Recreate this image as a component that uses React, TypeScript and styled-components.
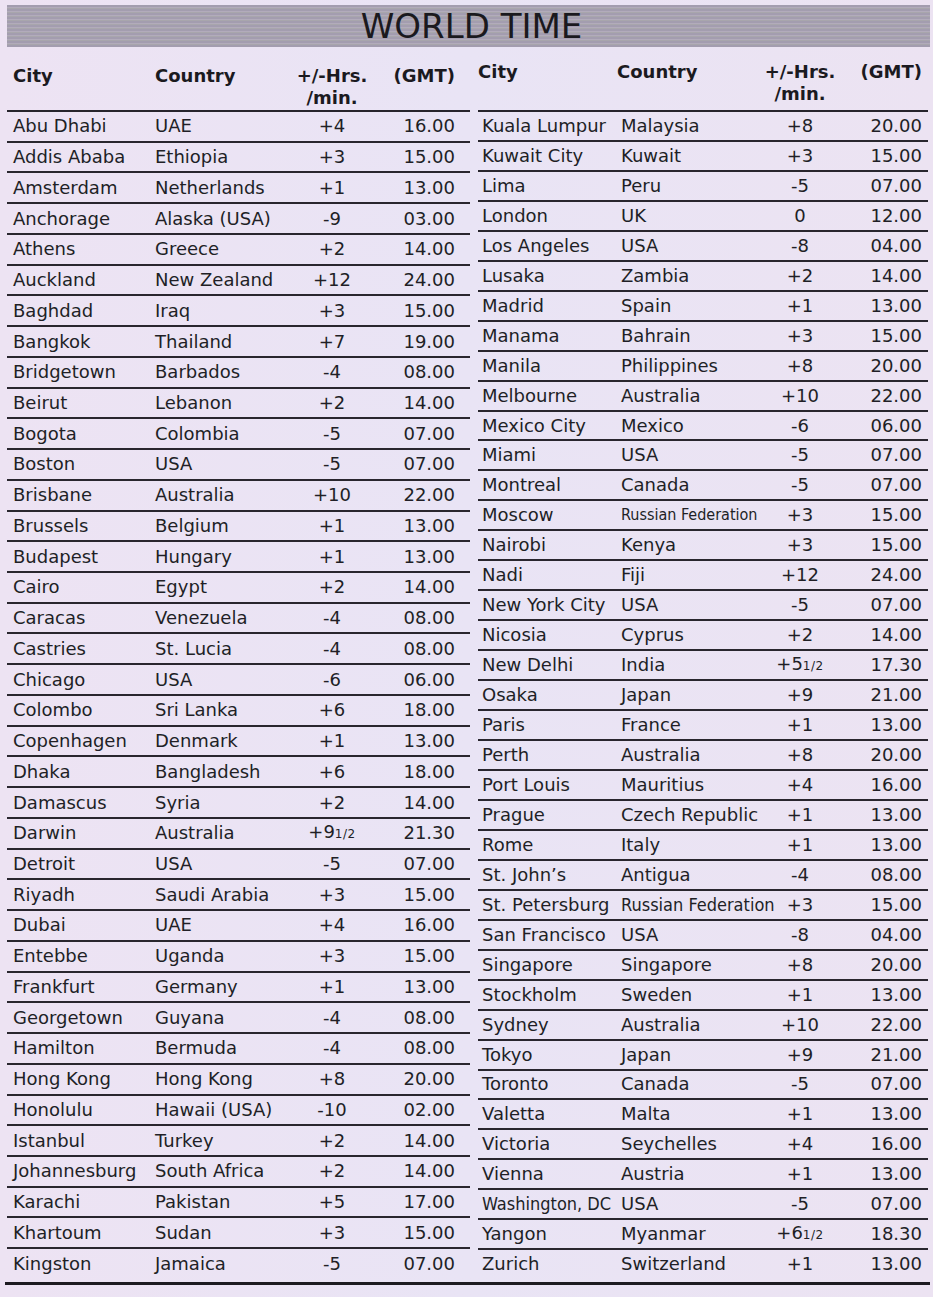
import styled, { createGlobalStyle } from 'styled-components';

type Side = 'left' | 'right';

type Entry = {
  city: string;
  country: string;
  offset: string;
  half?: boolean;
  gmt: string;
  narrow?: 'small' | 'fit';
  cityNarrow?: boolean;
};

const left: Entry[] = [
  { city: 'Abu Dhabi', country: 'UAE', offset: '+4', gmt: '16.00' },
  { city: 'Addis Ababa', country: 'Ethiopia', offset: '+3', gmt: '15.00' },
  { city: 'Amsterdam', country: 'Netherlands', offset: '+1', gmt: '13.00' },
  { city: 'Anchorage', country: 'Alaska (USA)', offset: '-9', gmt: '03.00' },
  { city: 'Athens', country: 'Greece', offset: '+2', gmt: '14.00' },
  { city: 'Auckland', country: 'New Zealand', offset: '+12', gmt: '24.00' },
  { city: 'Baghdad', country: 'Iraq', offset: '+3', gmt: '15.00' },
  { city: 'Bangkok', country: 'Thailand', offset: '+7', gmt: '19.00' },
  { city: 'Bridgetown', country: 'Barbados', offset: '-4', gmt: '08.00' },
  { city: 'Beirut', country: 'Lebanon', offset: '+2', gmt: '14.00' },
  { city: 'Bogota', country: 'Colombia', offset: '-5', gmt: '07.00' },
  { city: 'Boston', country: 'USA', offset: '-5', gmt: '07.00' },
  { city: 'Brisbane', country: 'Australia', offset: '+10', gmt: '22.00' },
  { city: 'Brussels', country: 'Belgium', offset: '+1', gmt: '13.00' },
  { city: 'Budapest', country: 'Hungary', offset: '+1', gmt: '13.00' },
  { city: 'Cairo', country: 'Egypt', offset: '+2', gmt: '14.00' },
  { city: 'Caracas', country: 'Venezuela', offset: '-4', gmt: '08.00' },
  { city: 'Castries', country: 'St. Lucia', offset: '-4', gmt: '08.00' },
  { city: 'Chicago', country: 'USA', offset: '-6', gmt: '06.00' },
  { city: 'Colombo', country: 'Sri Lanka', offset: '+6', gmt: '18.00' },
  { city: 'Copenhagen', country: 'Denmark', offset: '+1', gmt: '13.00' },
  { city: 'Dhaka', country: 'Bangladesh', offset: '+6', gmt: '18.00' },
  { city: 'Damascus', country: 'Syria', offset: '+2', gmt: '14.00' },
  { city: 'Darwin', country: 'Australia', offset: '+9', half: true, gmt: '21.30' },
  { city: 'Detroit', country: 'USA', offset: '-5', gmt: '07.00' },
  { city: 'Riyadh', country: 'Saudi Arabia', offset: '+3', gmt: '15.00' },
  { city: 'Dubai', country: 'UAE', offset: '+4', gmt: '16.00' },
  { city: 'Entebbe', country: 'Uganda', offset: '+3', gmt: '15.00' },
  { city: 'Frankfurt', country: 'Germany', offset: '+1', gmt: '13.00' },
  { city: 'Georgetown', country: 'Guyana', offset: '-4', gmt: '08.00' },
  { city: 'Hamilton', country: 'Bermuda', offset: '-4', gmt: '08.00' },
  { city: 'Hong Kong', country: 'Hong Kong', offset: '+8', gmt: '20.00' },
  { city: 'Honolulu', country: 'Hawaii (USA)', offset: '-10', gmt: '02.00' },
  { city: 'Istanbul', country: 'Turkey', offset: '+2', gmt: '14.00' },
  { city: 'Johannesburg', country: 'South Africa', offset: '+2', gmt: '14.00' },
  { city: 'Karachi', country: 'Pakistan', offset: '+5', gmt: '17.00' },
  { city: 'Khartoum', country: 'Sudan', offset: '+3', gmt: '15.00' },
  { city: 'Kingston', country: 'Jamaica', offset: '-5', gmt: '07.00' },
];

const right: Entry[] = [
  { city: 'Kuala Lumpur', country: 'Malaysia', offset: '+8', gmt: '20.00' },
  { city: 'Kuwait City', country: 'Kuwait', offset: '+3', gmt: '15.00' },
  { city: 'Lima', country: 'Peru', offset: '-5', gmt: '07.00' },
  { city: 'London', country: 'UK', offset: '0', gmt: '12.00' },
  { city: 'Los Angeles', country: 'USA', offset: '-8', gmt: '04.00' },
  { city: 'Lusaka', country: 'Zambia', offset: '+2', gmt: '14.00' },
  { city: 'Madrid', country: 'Spain', offset: '+1', gmt: '13.00' },
  { city: 'Manama', country: 'Bahrain', offset: '+3', gmt: '15.00' },
  { city: 'Manila', country: 'Philippines', offset: '+8', gmt: '20.00' },
  { city: 'Melbourne', country: 'Australia', offset: '+10', gmt: '22.00' },
  { city: 'Mexico City', country: 'Mexico', offset: '-6', gmt: '06.00' },
  { city: 'Miami', country: 'USA', offset: '-5', gmt: '07.00' },
  { city: 'Montreal', country: 'Canada', offset: '-5', gmt: '07.00' },
  { city: 'Moscow', country: 'Russian Federation', narrow: 'small', offset: '+3', gmt: '15.00' },
  { city: 'Nairobi', country: 'Kenya', offset: '+3', gmt: '15.00' },
  { city: 'Nadi', country: 'Fiji', offset: '+12', gmt: '24.00' },
  { city: 'New York City', country: 'USA', offset: '-5', gmt: '07.00' },
  { city: 'Nicosia', country: 'Cyprus', offset: '+2', gmt: '14.00' },
  { city: 'New Delhi', country: 'India', offset: '+5', half: true, gmt: '17.30' },
  { city: 'Osaka', country: 'Japan', offset: '+9', gmt: '21.00' },
  { city: 'Paris', country: 'France', offset: '+1', gmt: '13.00' },
  { city: 'Perth', country: 'Australia', offset: '+8', gmt: '20.00' },
  { city: 'Port Louis', country: 'Mauritius', offset: '+4', gmt: '16.00' },
  { city: 'Prague', country: 'Czech Republic', offset: '+1', gmt: '13.00' },
  { city: 'Rome', country: 'Italy', offset: '+1', gmt: '13.00' },
  { city: 'St. John’s', country: 'Antigua', offset: '-4', gmt: '08.00' },
  { city: 'St. Petersburg', country: 'Russian Federation', narrow: 'fit', offset: '+3', gmt: '15.00' },
  { city: 'San Francisco', country: 'USA', offset: '-8', gmt: '04.00' },
  { city: 'Singapore', country: 'Singapore', offset: '+8', gmt: '20.00' },
  { city: 'Stockholm', country: 'Sweden', offset: '+1', gmt: '13.00' },
  { city: 'Sydney', country: 'Australia', offset: '+10', gmt: '22.00' },
  { city: 'Tokyo', country: 'Japan', offset: '+9', gmt: '21.00' },
  { city: 'Toronto', country: 'Canada', offset: '-5', gmt: '07.00' },
  { city: 'Valetta', country: 'Malta', offset: '+1', gmt: '13.00' },
  { city: 'Victoria', country: 'Seychelles', offset: '+4', gmt: '16.00' },
  { city: 'Vienna', country: 'Austria', offset: '+1', gmt: '13.00' },
  { city: 'Washington, DC', cityNarrow: true, country: 'USA', offset: '-5', gmt: '07.00' },
  { city: 'Yangon', country: 'Myanmar', offset: '+6', half: true, gmt: '18.30' },
  { city: 'Zurich', country: 'Switzerland', offset: '+1', gmt: '13.00' },
];

const GlobalStyle = createGlobalStyle`
  html, body {
    margin: 0;
    padding: 0;
    background: #ebe4f3;
  }
  body {
    font-family: "DejaVu Sans", Verdana, sans-serif;
    color: #1d1b21;
  }
`;

const Page = styled.div`
  width: 933px;
  height: 1297px;
  padding: 5px 0 0 7px;
  box-sizing: border-box;
  background: linear-gradient(90deg, #ede3f3 0%, #e9e4f5 50%, #ece3f2 100%);
`;

const TitleBar = styled.div`
  width: 923px;
  height: 42px;
  display: flex;
  align-items: center;
  justify-content: center;
  background: repeating-linear-gradient(
    180deg,
    #a39daf 0px,
    #a39daf 2px,
    #b2abbb 2px,
    #b2abbb 3px,
    #a8a6ac 3px,
    #a8a6ac 4px
  );
`;

const Title = styled.h1`
  margin: 0;
  padding-left: 6px;
  font-family: "DejaVu Sans", Verdana, sans-serif;
  font-weight: 400;
  font-size: 34px;
  line-height: 42px;
  color: #1a191e;
`;

const Tables = styled.div`
  display: grid;
  grid-template-columns: 463px 450px;
  column-gap: 8px;
  height: 1231px;
`;

const Column = styled.section`
  display: flex;
  flex-direction: column;
`;

const cellGrid = (side: Side) =>
  side === 'left' ? '142px 140px 86px 1fr' : '139px 141px 84px 1fr';

const HeadRow = styled.div<{ $side: Side }>`
  display: grid;
  grid-template-columns: ${({ $side }) => cellGrid($side)};
  align-items: start;
  height: 65px;
  padding-top: ${({ $side }) => ($side === 'left' ? '18px' : '14px')};
  box-sizing: border-box;
  border-bottom: 2px solid #27242c;
  font-weight: 700;
  font-size: 18px;
  line-height: 22px;
  color: #1b1a1f;
`;

const HeadCell = styled.div<{ $align?: 'left' | 'center' | 'right'; $pad?: number }>`
  text-align: ${({ $align }) => $align ?? 'left'};
  padding-left: ${({ $align, $pad }) => ($align === 'right' ? 0 : $pad ?? 0)}px;
  padding-right: ${({ $align, $pad }) => ($align === 'right' ? $pad ?? 0 : 0)}px;
  white-space: nowrap;
`;

const Body = styled.div`
  flex: 1;
  display: flex;
  flex-direction: column;
`;

const Row = styled.div<{ $side: Side; $last: boolean }>`
  flex: 1;
  display: grid;
  grid-template-columns: ${({ $side }) => cellGrid($side)};
  align-items: center;
  border-bottom: ${({ $last }) => ($last ? 'none' : '2px solid #29262e')};
  font-size: 18px;
  line-height: 22px;
`;

const Cell = styled.div<{
  $align?: 'left' | 'center' | 'right';
  $pad?: number;
  $narrow?: 'small' | 'fit';
}>`
  text-align: ${({ $align }) => $align ?? 'left'};
  padding-left: ${({ $align, $pad }) => ($align === 'right' ? 0 : $pad ?? 0)}px;
  padding-right: ${({ $align, $pad }) => ($align === 'right' ? $pad ?? 0 : 0)}px;
  white-space: nowrap;
  overflow: visible;
  font-family: ${({ $narrow }) =>
    $narrow ? '"DejaVu Sans Condensed", "DejaVu Sans", sans-serif' : 'inherit'};
  font-stretch: ${({ $narrow }) => ($narrow ? 'condensed' : 'normal')};
  font-size: ${({ $narrow }) => ($narrow === 'small' ? '16px' : '18px')};
  color: #211f26;
`;

const Frac = styled.span`
  font-size: 12px;
  letter-spacing: 0.5px;
`;

const BottomRule = styled.div`
  width: 925px;
  margin: 4px 0 0 -2px;
  height: 3px;
  background: #1d1b21;
`;

function TimeColumn({ side, rows }: { side: Side; rows: Entry[] }) {
  const cityPad = side === 'left' ? 6 : 4;
  const headPad = side === 'left' ? 6 : 0;
  const gmtPad = side === 'left' ? 15 : 6;
  return (
    <Column>
      <HeadRow $side={side}>
        <HeadCell $pad={headPad}>City</HeadCell>
        <HeadCell $pad={headPad}>Country</HeadCell>
        <HeadCell $align="center">
          +/-Hrs.
          <br />
          /min.
        </HeadCell>
        <HeadCell $align="right" $pad={gmtPad}>
          (GMT)
        </HeadCell>
      </HeadRow>
      <Body>
        {rows.map((r, i) => (
          <Row key={r.city} $side={side} $last={i === rows.length - 1}>
            <Cell $pad={cityPad} $narrow={r.cityNarrow ? 'fit' : undefined}>
              {r.city}
            </Cell>
            <Cell $pad={cityPad} $narrow={r.narrow}>
              {r.country}
            </Cell>
            <Cell $align="center">
              {r.offset}
              {r.half && <Frac>1/2</Frac>}
            </Cell>
            <Cell $align="right" $pad={gmtPad}>
              {r.gmt}
            </Cell>
          </Row>
        ))}
      </Body>
    </Column>
  );
}

export default function App() {
  return (
    <>
      <GlobalStyle />
      <Page>
        <TitleBar>
          <Title>WORLD TIME</Title>
        </TitleBar>
        <Tables>
          <TimeColumn side="left" rows={left} />
          <TimeColumn side="right" rows={right} />
        </Tables>
        <BottomRule />
      </Page>
    </>
  );
}
